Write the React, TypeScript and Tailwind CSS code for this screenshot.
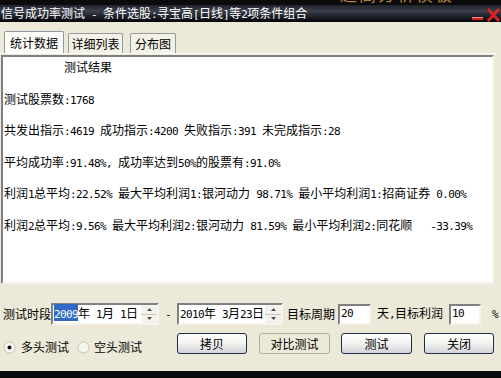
import React from 'react'

// half-width runs are drawn in a mono face squeezed to 6px per char, like SimSun 12px
const HALF = "font-['DejaVu_Sans_Mono'] text-[11px] tracking-[-0.62px]"

function T({ s }: { s: string }) {
  const parts = s.split(/([ -~]+)/).filter(Boolean)
  return (
    <>
      {parts.map((p, i) =>
        /^[ -~]+$/.test(p) ? (
          <span key={i} className={HALF}>
            {p}
          </span>
        ) : (
          <span key={i}>{p}</span>
        )
      )}
    </>
  )
}

const lines = [
  '          测试结果',
  '测试股票数:1768',
  '共发出指示:4619 成功指示:4200 失败指示:391 未完成指示:28',
  '平均成功率:91.48%, 成功率达到50%的股票有:91.0%',
  '利润1总平均:22.52% 最大平均利润1:银河动力 98.71% 最小平均利润1:招商证券 0.00%',
  '利润2总平均:9.56% 最大平均利润2:银河动力 81.59% 最小平均利润2:同花顺   -33.39%',
]

function Spin() {
  return (
    <div className="flex flex-col w-[16px] h-full ml-auto">
      <div className="flex-1 flex items-center justify-center bg-[#f3f2ec] border-b border-[#c9c6b8]">
        <svg width="5" height="3" viewBox="0 0 5 3">
          <path d="M2.5 0 L5 3 L0 3 Z" fill="#4d4d4d" />
        </svg>
      </div>
      <div className="flex-1 flex items-center justify-center bg-[#f3f2ec]">
        <svg width="5" height="3" viewBox="0 0 5 3">
          <path d="M0 0 L5 0 L2.5 3 Z" fill="#4d4d4d" />
        </svg>
      </div>
    </div>
  )
}

const sunken =
  'bg-white border-2 border-t-[#808080] border-l-[#808080] border-r-[#f4f3ee] border-b-[#f4f3ee]'

function DateBox({ children, className }: { children: React.ReactNode; className: string }) {
  return (
    <div className={`${sunken} h-[22px] flex items-center ${className}`}>
      <div className="pl-[1px] whitespace-pre leading-[16px]">{children}</div>
      <Spin />
    </div>
  )
}

function Radio({ checked }: { checked?: boolean }) {
  return (
    <svg width="13" height="13" viewBox="0 0 13 13">
      <circle cx="6.5" cy="6.5" r="5.5" fill="#f7f6f1" stroke="#c3bfb2" />
      {checked && <circle cx="6.5" cy="6.5" r="2" fill="#111" />}
    </svg>
  )
}

function Button({ label, flat, className }: { label: string; flat?: boolean; className: string }) {
  return (
    <div
      className={
        flat
          ? `h-[21px] rounded-[3px] border border-[#b2ae9f] bg-[#ece9d8] flex items-center justify-center ${className}`
          : `h-[21px] rounded-[3px] border border-[#1e2d4a] bg-linear-to-b from-[#ffffff] via-[#f2f2ee] to-[#d3d3dc] flex items-center justify-center ${className}`
      }
    >
      {label}
    </div>
  )
}

export default function App() {
  return (
    <div className="w-[501px] h-[378px] bg-[#ece9d8] flex flex-col overflow-hidden font-['Noto_Sans_CJK_SC',sans-serif] text-[12px] text-black">
      {/* title bar */}
      <div className="relative h-[22px] shrink-0 overflow-hidden bg-linear-to-b from-[#0d0d0f] via-[#3a404d] to-[#060608]">
        <div className="absolute left-0 right-0 top-0 h-[5px] bg-[#0b0b0b]" />
        <div className="absolute left-[340px] top-[-15px] text-[17px] leading-[18px] text-[#b9803a] tracking-[2px]">
          超高分析模板
        </div>
        <div className="absolute left-[1px] top-[5px] leading-[16px] whitespace-pre text-white">
          <T s="信号成功率测试 - 条件选股:寻宝高[日线]等2项条件组合" />
        </div>
        <svg className="absolute left-[470px] top-[7px]" width="31" height="15" viewBox="0 0 31 15">
          <rect x="2" y="10" width="11" height="3" fill="#d91c1c" />
          <rect x="2" y="10" width="11" height="1" fill="#f58a8a" />
          <path d="M18 2 L29 14 M29 2 L18 14" stroke="#e32222" strokeWidth="2.6" />
        </svg>
      </div>

      {/* tabs */}
      <div className="mt-[9px] h-[22px] flex items-end pl-[4px]">
        <div className="w-[60px] h-[22px] border border-b-0 border-[#919b9c] bg-[#fbfbf8] rounded-t-[2px] flex items-center justify-center">
          统计数据
        </div>
        <div className="ml-[4px] w-[55px] h-[20px] border border-b-0 border-[#919b9c] bg-[#f3f1e8] rounded-t-[2px] flex items-center justify-center">
          详细列表
        </div>
        <div className="ml-[7px] w-[46px] h-[20px] border border-b-0 border-[#919b9c] bg-[#f3f1e8] rounded-t-[2px] flex items-center justify-center">
          分布图
        </div>
      </div>
      <div className="h-[2px] border-t border-[#fdfdfb] mr-[4px]" />

      {/* result text */}
      <div className={`${sunken} ml-[1px] mr-[7px] h-[229px] pt-[2px] pl-[1px] whitespace-pre leading-[15.8px]`}>
        {lines.map((l, i) => (
          <div key={i} className="h-[31.6px]">
            <T s={l} />
          </div>
        ))}
      </div>

      {/* period row */}
      <div className="mt-[19px] h-[22px] flex items-center pl-[3px] whitespace-pre">
        <span>测试时段</span>
        <DateBox className="w-[108px]">
          <span className="bg-[#316ac5] text-white">
            <T s="2009" />
          </span>
          <T s="年 1月 1日" />
        </DateBox>
        <span className="ml-[6px] mr-[5px]">
          <T s="-" />
        </span>
        <DateBox className="w-[106px] ml-[1px]">
          <T s="2010年 3月23日" />
        </DateBox>
        <span className="ml-[4px]">目标周期</span>
        <div className={`${sunken} ml-[3px] w-[33px] h-[21px] pl-[1px] flex items-center`}>
          <T s="20" />
        </div>
        <span className="ml-[6px]">
          <T s="天,目标利润" />
        </span>
        <div className={`${sunken} ml-[6px] w-[32px] h-[21px] pl-[1px] flex items-center`}>
          <T s="10" />
        </div>
        <span className="ml-[11px]">
          <T s="%" />
        </span>
      </div>

      {/* mode + buttons */}
      <div className="mt-[8px] h-[21px] flex items-start pl-[3px]">
        <div className="mt-[7px] flex items-center h-[14px]">
          <Radio checked />
          <span className="ml-[5px]">多头测试</span>
          <span className="ml-[8px]">
            <Radio />
          </span>
          <span className="ml-[4px]">空头测试</span>
        </div>
        <Button label="拷贝" className="ml-[35px] w-[70px]" />
        <Button label="对比测试" flat className="ml-[12px] w-[71px]" />
        <Button label="测试" className="ml-[11px] w-[71px]" />
        <Button label="关闭" className="ml-[12px] w-[70px]" />
      </div>

      <div className="flex-1" />
      <div className="h-[7px] shrink-0 bg-[#0a0a0a]" />
    </div>
  )
}
